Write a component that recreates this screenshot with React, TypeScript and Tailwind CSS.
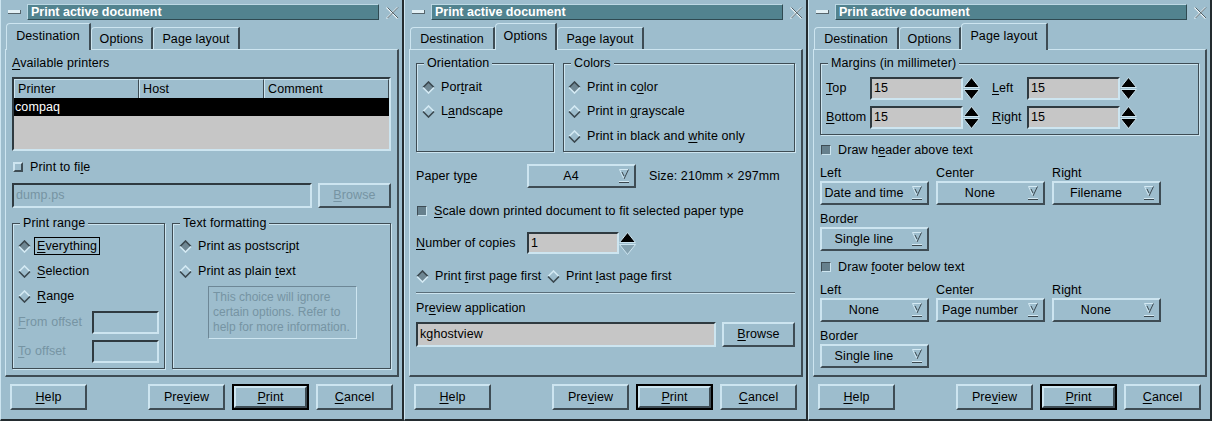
import React from 'react';

// Motif-ish bevels
const raised = 'border-2 border-t-[#cde5f0] border-l-[#cde5f0] border-r-[#3e4c54] border-b-[#3e4c54]';
const sunken = 'border-2 border-t-[#2f3a40] border-l-[#2f3a40] border-r-[#cde5f0] border-b-[#cde5f0]';

function M({ children }: { children: React.ReactNode }) {
  return <span className="underline decoration-1 underline-offset-2">{children}</span>;
}

function Diamond({ on }: { on?: boolean }) {
  return (
    <svg width="13" height="13" viewBox="0 0 13 13" className="shrink-0">
      <polygon points="6.5,1 12,6.5 6.5,12 1,6.5" fill={on ? '#6f8793' : '#9dbdcd'} />
      <polyline points="1,6.5 6.5,1 12,6.5" fill="none" stroke={on ? '#3a474e' : '#d4eaf4'} strokeWidth="1.6" />
      <polyline points="1,6.5 6.5,12 12,6.5" fill="none" stroke={on ? '#d4eaf4' : '#3a474e'} strokeWidth="1.6" />
    </svg>
  );
}

function Radio({ on, focus, className, children }: { on?: boolean; focus?: boolean; className?: string; children: React.ReactNode }) {
  return (
    <div className={`flex items-center h-[20px] shrink-0 whitespace-nowrap ${className ?? ''}`}>
      <Diamond on={on} />
      {focus ? (
        <span className="ml-[3px] border border-black px-[2px] h-[18px] flex items-center">{children}</span>
      ) : (
        <span className="ml-[6px]">{children}</span>
      )}
    </div>
  );
}

function Check({ on }: { on?: boolean }) {
  return (
    <span
      className={
        on
          ? 'w-[10px] h-[10px] shrink-0 bg-[#66808d] border border-t-[#3e4c54] border-l-[#3e4c54] border-r-[#cde5f0] border-b-[#cde5f0]'
          : 'w-[10px] h-[10px] shrink-0 bg-[#9dbdcd] border-2 border-t-[#cde5f0] border-l-[#cde5f0] border-r-[#3e4c54] border-b-[#3e4c54]'
      }
    />
  );
}

function CheckRow({ on, className, children }: { on?: boolean; className?: string; children: React.ReactNode }) {
  return (
    <div className={`h-[16px] flex items-center pl-[1px] shrink-0 whitespace-nowrap ${className ?? ''}`}>
      <Check on={on} />
      <span className="ml-[7px]">{children}</span>
    </div>
  );
}

function Btn({ className, children }: { className?: string; children: React.ReactNode }) {
  return <div className={`${raised} flex items-center justify-center shrink-0 ${className ?? ''}`}>{children}</div>;
}

function Field({ className, children }: { className?: string; children?: React.ReactNode }) {
  return <div className={`${sunken} flex items-center pl-[2px] shrink-0 ${className ?? ''}`}>{children}</div>;
}

function ComboArrow() {
  return (
    <svg width="10" height="15" viewBox="0 0 10 15" className="shrink-0 ml-[6px]">
      <polygon points="0.5,0.5 9.5,0.5 5,10" fill="#9dbdcd" />
      <polyline points="5,10 0.5,0.5 9.5,0.5" fill="none" stroke="#d4eaf4" />
      <line x1="9.5" y1="0.5" x2="5" y2="10" stroke="#3a474e" />
      <line x1="3" y1="3" x2="5" y2="7" stroke="#3a474e" />
      <line x1="0" y1="12.5" x2="10" y2="12.5" stroke="#d4eaf4" />
      <line x1="0" y1="13.5" x2="10" y2="13.5" stroke="#3a474e" />
    </svg>
  );
}

function Combo({ value, className }: { value: string; className?: string }) {
  return (
    <div className={`${raised} h-[24px] w-[109px] flex items-center shrink-0 ${className ?? ''}`}>
      <span className="w-[84px] text-center whitespace-nowrap">{value}</span>
      <ComboArrow />
    </div>
  );
}

function Spin({ downOff }: { downOff?: boolean }) {
  return (
    <svg width="17" height="23" viewBox="0 0 17 23" className="shrink-0">
      <polygon points="0.5,10.5 8.5,0.5 16.5,10.5" fill="#000" stroke="#cde5f0" strokeWidth="1" />
      <polygon
        points="0.5,12.5 16.5,12.5 8.5,22.5"
        fill={downOff ? '#86a3b1' : '#000'}
        stroke="#cde5f0"
        strokeWidth="1"
      />
    </svg>
  );
}

function Group({ title, className, children }: { title: string; className?: string; children: React.ReactNode }) {
  return (
    <fieldset
      className={`border border-[#3e4c54] shadow-[inset_1px_1px_0_#cde5f0,1px_1px_0_#cde5f0] shrink-0 ${className ?? ''}`}
    >
      <legend className="ml-[7px] px-[3px] h-[14px] leading-[14px] bg-[#9dbdcd] whitespace-nowrap">{title}</legend>
      {children}
    </fieldset>
  );
}

function TitleBar() {
  return (
    <div className="h-[23px] pt-[4px] flex items-start shrink-0">
      <div className="mt-[6px] ml-[7px] w-[13px] h-[4px] bg-[#e2f0f5] border-b border-r border-[#56656c]" />
      <div className="ml-[6px] w-[352px] h-[16px] bg-[#52838f] border border-t-[#bcd8e4] border-l-[#bcd8e4] border-r-[#2f4a52] border-b-[#2f4a52] text-white font-bold text-[12.5px] tracking-normal leading-[14px] pl-[3px] whitespace-nowrap">
        Print active document
      </div>
      <svg width="14" height="14" viewBox="0 0 14 14" className="ml-[6px] mt-[2px]">
        <path d="M1.5 1.5 L12.5 12.5 M12.5 1.5 L1.5 12.5" stroke="#f0f7fa" strokeWidth="1.2" />
        <path d="M2.5 1.5 L13 12 M13 1.5 L2.5 12" stroke="#46535a" strokeWidth="0.9" />
      </svg>
    </div>
  );
}

const TABS = [
  { name: 'Destination', w: 'w-[85px]' },
  { name: 'Options', w: 'w-[62px]' },
  { name: 'Page layout', w: 'w-[87px]' },
];

function Tabs({ active }: { active: number }) {
  return (
    <div className="h-[26px] flex items-end pl-[5px] relative z-10 shrink-0">
      {TABS.map((t, i) => (
        <div
          key={t.name}
          className={`${t.w} flex items-center justify-center whitespace-nowrap border-t border-l border-t-[#cde5f0] border-l-[#cde5f0] border-r-2 border-r-[#3e4c54] rounded-tl-[4px] ${
            i === active ? 'h-[27px] -mb-px bg-[#9dbdcd] pb-[1px]' : 'h-[22px] pt-[1px]'
          }`}
        >
          {t.name}
        </div>
      ))}
    </div>
  );
}

function ButtonRow() {
  return (
    <div className="mt-[7px] h-[26px] flex pl-[9px] shrink-0">
      <Btn className="w-[77px] h-[26px]">
        <M>H</M>elp
      </Btn>
      <Btn className="ml-[61px] w-[77px] h-[26px]">
        Pre<M>v</M>iew
      </Btn>
      <div className="ml-[7px] w-[77px] h-[26px] border-2 border-black shrink-0">
        <Btn className="w-full h-full">
          <M>P</M>rint
        </Btn>
      </div>
      <Btn className="ml-[7px] w-[77px] h-[26px]">
        <M>C</M>ancel
      </Btn>
    </div>
  );
}

function Window({ tab, children }: { tab: number; children: React.ReactNode }) {
  return (
    <div className="w-[404px] h-[421px] flex flex-col shrink-0 border-l border-l-[#cde5f0] border-r-2 border-r-[#232b2f] border-b-2 border-b-[#232b2f]">
      <TitleBar />
      <Tabs active={tab} />
      <div className="ml-[4px] w-[394px] h-[328px] shrink-0 border-t border-l border-t-[#cde5f0] border-l-[#cde5f0] border-r-2 border-b-2 border-r-[#3e4c54] border-b-[#3e4c54] px-[6px] flex flex-col">
        {children}
      </div>
      <ButtonRow />
    </div>
  );
}

const dim = 'text-[#7694a3]';

function DestinationPage() {
  return (
    <Window tab={0}>
      <div className="mt-[5px] h-[16px] flex items-center">
        <span>
          <M>A</M>vailable printers
        </span>
      </div>
      <div className={`mt-[6px] h-[74px] ${sunken} bg-[#c6c6c6] flex flex-col shrink-0`}>
        <div className="h-[19px] flex bg-[#9dbdcd] shrink-0">
          <div className="w-[125px] border-t border-l border-t-[#cde5f0] border-l-[#cde5f0] border-r border-r-[#3e4c54] pl-[3px] flex items-center">Printer</div>
          <div className="w-[125px] border-t border-l border-t-[#cde5f0] border-l-[#cde5f0] border-r border-r-[#3e4c54] pl-[3px] flex items-center">Host</div>
          <div className="flex-1 border-t border-l border-t-[#cde5f0] border-l-[#cde5f0] border-r border-r-[#3e4c54] pl-[3px] flex items-center">Comment</div>
        </div>
        <div className="h-[18px] bg-black text-white pl-[1px] flex items-center shrink-0">compaq</div>
      </div>
      <CheckRow className="mt-[8px]">
        Print to fi<M>l</M>e
      </CheckRow>
      <div className="mt-[8px] h-[25px] flex gap-[6px] shrink-0">
        <Field className={`w-[300px] h-[25px] ${dim}`}>dump.ps</Field>
        <Btn className={`w-[73px] h-[25px] ${dim}`}>
          <M>B</M>rowse
        </Btn>
      </div>
      <div className="mt-[8px] h-[153px] flex gap-[7px] shrink-0">
        <Group title="Print range" className="w-[153px] h-full">
          <div className="pl-[5px]">
            <Radio on focus className="mt-[6px]">
              <M>E</M>verything
            </Radio>
            <Radio className="mt-[5px]">
              <M>S</M>election
            </Radio>
            <Radio className="mt-[5px]">
              <M>R</M>ange
            </Radio>
            <div className="mt-[5px] h-[23px] flex items-center">
              <span className={`w-[74px] whitespace-nowrap ${dim}`}>
                <M>F</M>rom offset
              </span>
              <Field className="w-[67px] h-[23px]" />
            </div>
            <div className="mt-[6px] h-[23px] flex items-center">
              <span className={`w-[74px] whitespace-nowrap ${dim}`}>
                <M>T</M>o offset
              </span>
              <Field className="w-[67px] h-[23px]" />
            </div>
          </div>
        </Group>
        <Group title="Text formatting" className="w-[219px] h-full">
          <div className="pl-[6px]">
            <Radio on className="mt-[6px]">
              Print as postscr<M>i</M>pt
            </Radio>
            <Radio className="mt-[5px]">
              Print as plain <M>t</M>ext
            </Radio>
            <div
              className={`mt-[5px] ml-[29px] w-[149px] h-[53px] border border-t-[#6d8796] border-l-[#6d8796] border-r-[#cde5f0] border-b-[#cde5f0] pl-[4px] pt-[3px] text-[12px] tracking-normal leading-[15px] whitespace-nowrap ${dim}`}
            >
              This choice will ignore
              <br />
              certain options. Refer to
              <br />
              help for more information.
            </div>
          </div>
        </Group>
      </div>
    </Window>
  );
}

function OptionsPage() {
  return (
    <Window tab={1}>
      <div className="mt-[6px] h-[96px] flex gap-[9px] shrink-0">
        <Group title="Orientation" className="w-[138px] h-full">
          <div className="pl-[5px]">
            <Radio on className="mt-[7px]">
              Por<M>t</M>rait
            </Radio>
            <Radio className="mt-[4px]">
              L<M>a</M>ndscape
            </Radio>
          </div>
        </Group>
        <Group title="Colors" className="w-[232px] h-full">
          <div className="pl-[4px]">
            <Radio on className="mt-[7px]">
              Print in c<M>o</M>lor
            </Radio>
            <Radio className="mt-[4px]">
              Print in <M>g</M>rayscale
            </Radio>
            <Radio className="mt-[5px]">
              Print in black and <M>w</M>hite only
            </Radio>
          </div>
        </Group>
      </div>
      <div className="mt-[12px] h-[24px] flex items-center shrink-0 whitespace-nowrap">
        <span className="w-[111px]">
          Paper ty<M>p</M>e
        </span>
        <Combo value="A4" />
        <span className="ml-[13px]">Size: 210mm × 297mm</span>
      </div>
      <CheckRow on className="mt-[15px]">
        <M>S</M>cale down printed document to fit selected paper type
      </CheckRow>
      <div className="mt-[13px] h-[22px] flex items-center shrink-0 whitespace-nowrap">
        <span className="w-[111px]">
          <M>N</M>umber of copies
        </span>
        <Field className="w-[92px] h-[22px] bg-[#c6c6c6]">1</Field>
        <Spin downOff />
      </div>
      <div className="mt-[12px] h-[20px] flex items-center shrink-0">
        <Radio on className="w-[131px]">
          Print <M>f</M>irst page first
        </Radio>
        <Radio>
          Print <M>l</M>ast page first
        </Radio>
      </div>
      <div className="mt-[6px] h-[2px] border-t border-t-[#5a6e79] border-b border-b-[#cde5f0] shrink-0" />
      <div className="mt-[6px] h-[16px] flex items-center shrink-0">
        <span>
          Pr<M>e</M>view application
        </span>
      </div>
      <div className="mt-[6px] h-[25px] flex gap-[6px] shrink-0">
        <Field className="w-[300px] h-[25px] bg-[#c6c6c6]">kghostview</Field>
        <Btn className="w-[73px] h-[25px]">
          <M>B</M>rowse
        </Btn>
      </div>
    </Window>
  );
}

function MarginRow({ a, b, className }: { a: React.ReactNode; b: React.ReactNode; className?: string }) {
  return (
    <div className={`h-[23px] flex items-center ${className ?? ''}`}>
      <span className="w-[44px]">{a}</span>
      <Field className="w-[93px] h-[23px] bg-[#c6c6c6]">15</Field>
      <Spin />
      <span className="ml-[12px] w-[35px]">{b}</span>
      <Field className="w-[93px] h-[23px] bg-[#c6c6c6]">15</Field>
      <Spin />
    </div>
  );
}

function PosLabels({ className }: { className?: string }) {
  return (
    <div className={`h-[14px] flex gap-[7px] items-center shrink-0 ${className ?? ''}`}>
      <span className="w-[109px]">Left</span>
      <span className="w-[109px]">Center</span>
      <span className="w-[109px]">Right</span>
    </div>
  );
}

function LayoutPage() {
  return (
    <Window tab={2}>
      <Group title="Margins (in millimeter)" className="mt-[6px] h-[79px]">
        <div className="pl-[5px]">
          <MarginRow
            className="mt-[7px]"
            a={
              <>
                <M>T</M>op
              </>
            }
            b={
              <>
                <M>L</M>eft
              </>
            }
          />
          <MarginRow
            className="mt-[6px]"
            a={
              <>
                <M>B</M>ottom
              </>
            }
            b={
              <>
                <M>R</M>ight
              </>
            }
          />
        </div>
      </Group>
      <CheckRow on className="mt-[7px]">
        Draw h<M>e</M>ader above text
      </CheckRow>
      <PosLabels className="mt-[8px]" />
      <div className="mt-[1px] flex gap-[7px] shrink-0">
        <Combo value="Date and time" />
        <Combo value="None" />
        <Combo value="Filename" />
      </div>
      <div className="mt-[7px] h-[14px] flex items-center shrink-0">Border</div>
      <div className="mt-[1px] flex shrink-0">
        <Combo value="Single line" />
      </div>
      <CheckRow on className="mt-[8px]">
        Draw <M>f</M>ooter below text
      </CheckRow>
      <PosLabels className="mt-[8px]" />
      <div className="mt-[1px] flex gap-[7px] shrink-0">
        <Combo value="None" />
        <Combo value="Page number" />
        <Combo value="None" />
      </div>
      <div className="mt-[7px] h-[14px] flex items-center shrink-0">Border</div>
      <div className="mt-[1px] flex shrink-0">
        <Combo value="Single line" />
      </div>
    </Window>
  );
}

export default function App() {
  return (
    <div className="w-[1212px] h-[421px] flex bg-[#9dbdcd] text-black text-[12.5px] tracking-[0.1px] leading-none font-['Liberation_Sans',Arial,sans-serif] overflow-hidden">
      <DestinationPage />
      <OptionsPage />
      <LayoutPage />
    </div>
  );
}
